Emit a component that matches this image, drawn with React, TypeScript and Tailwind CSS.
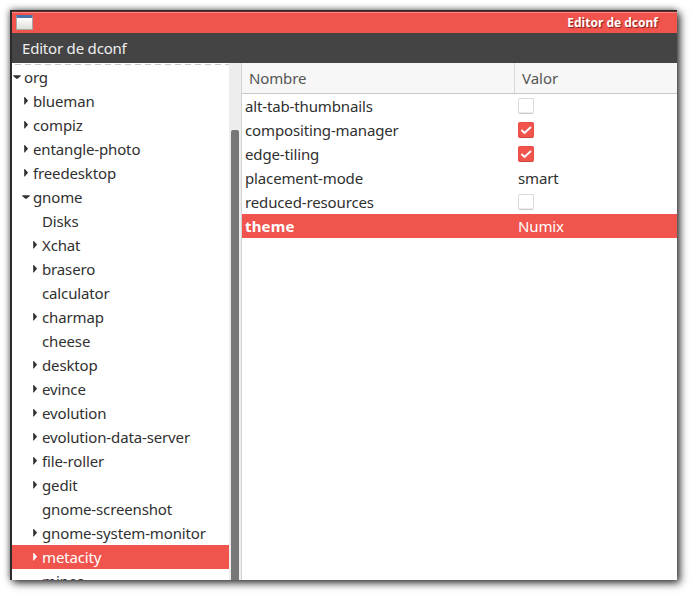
type Node = { name: string; depth: number; state?: 'open' | 'closed'; selected?: boolean };

const tree: Node[] = [
  { name: 'org', depth: 0, state: 'open' },
  { name: 'blueman', depth: 1, state: 'closed' },
  { name: 'compiz', depth: 1, state: 'closed' },
  { name: 'entangle-photo', depth: 1, state: 'closed' },
  { name: 'freedesktop', depth: 1, state: 'closed' },
  { name: 'gnome', depth: 1, state: 'open' },
  { name: 'Disks', depth: 2 },
  { name: 'Xchat', depth: 2, state: 'closed' },
  { name: 'brasero', depth: 2, state: 'closed' },
  { name: 'calculator', depth: 2 },
  { name: 'charmap', depth: 2, state: 'closed' },
  { name: 'cheese', depth: 2 },
  { name: 'desktop', depth: 2, state: 'closed' },
  { name: 'evince', depth: 2, state: 'closed' },
  { name: 'evolution', depth: 2, state: 'closed' },
  { name: 'evolution-data-server', depth: 2, state: 'closed' },
  { name: 'file-roller', depth: 2, state: 'closed' },
  { name: 'gedit', depth: 2, state: 'closed' },
  { name: 'gnome-screenshot', depth: 2 },
  { name: 'gnome-system-monitor', depth: 2, state: 'closed' },
  { name: 'metacity', depth: 2, state: 'closed', selected: true },
  { name: 'mines', depth: 2 },
];

const settings: { name: string; value: string | boolean; selected?: boolean }[] = [
  { name: 'alt-tab-thumbnails', value: false },
  { name: 'compositing-manager', value: true },
  { name: 'edge-tiling', value: true },
  { name: 'placement-mode', value: 'smart' },
  { name: 'reduced-resources', value: false },
  { name: 'theme', value: 'Numix', selected: true },
];

const indents = ['pl-0', 'pl-[9px]', 'pl-[18px]'];

function Expander({ state }: { state?: 'open' | 'closed' }) {
  return (
    <svg className="h-6 w-3 shrink-0" viewBox="0 0 12 24" fill="currentColor">
      {state === 'open' && <path d="M1.2 10.3h7.6v.6L5.6 13.8H4.4L1.2 10.9z" />}
      {state === 'closed' && <path d="M3.2 8h.6L6.8 11.2v.8L3.8 15.4h-.6z" />}
    </svg>
  );
}

function Check({ on }: { on: boolean }) {
  if (!on) {
    return <span className="h-4 w-4 rounded-[2px] border border-[#dadada] border-b-[#c8c8c8] bg-white shadow-[inset_0_-1px_0_#eeeeee]" />;
  }
  return (
    <span className="h-4 w-4 rounded-[2px] border border-[#e84f48] border-b-[#cf4640] bg-[#f0544c]">
      <svg className="block h-3.5 w-3.5" viewBox="0 0 14 14" fill="none" stroke="white" strokeWidth="2">
        <path d="M2.4 7.1l3.1 2.9L12 3.9" />
      </svg>
    </span>
  );
}

export default function App() {
  return (
    <div className="h-[596px] w-[693px] overflow-hidden bg-white pl-[10px] pt-[10px] font-['Noto_Sans',sans-serif] text-[15px] leading-6 tracking-[-0.14px] text-[#303030]">
      <div className="flex h-[570px] w-[667px] flex-col border-l-2 border-t border-[#2b2b2b] shadow-[3px_3px_8px_0px_rgba(0,0,0,0.8),-1px_-1px_6px_0px_rgba(0,0,0,0.35)]">
        <div className="flex h-[22px] shrink-0 items-center justify-between border-t border-[#6b2825] bg-[#f0544c] pl-1 pr-[19px] shadow-[inset_0_1px_0_#f58a84]">
          <span className="h-[15px] w-[17px] border border-t-[3px] border-[#a9aaa5] border-t-[#4c72ad] bg-gradient-to-b from-white to-[#dedfd9]" />
          <span className="text-[12px] font-bold leading-5 tracking-normal text-white [text-shadow:1px_1px_1px_rgba(70,0,0,0.65)]">Editor de dconf</span>
        </div>
        <div className="h-[30px] shrink-0 bg-[#444444] pl-[10px] leading-[30px] tracking-[-0.2px] text-[#eeeeee]">Editor de dconf</div>
        <div className="flex min-h-0 flex-1">
          <div className="w-[217px] shrink-0 overflow-hidden bg-white">
            <div className="h-0.5 bg-[repeating-linear-gradient(90deg,transparent_0_3px,#c9c9c9_3px_9px,transparent_9px_10px)] bg-[length:100%_1px] bg-bottom bg-no-repeat" />
            {tree.map((n) => (
              <div key={n.name} className={`flex h-6 ${indents[n.depth]} ${n.selected ? 'bg-[#f0544c] text-white' : ''}`}>
                <Expander state={n.state} />
                <span className="whitespace-nowrap">{n.name}</span>
              </div>
            ))}
          </div>
          <div className="w-3 shrink-0 bg-[#ededed] pl-0.5 pt-[67px]">
            <div className="h-full w-2 rounded-t-[2px] bg-[#777777]" />
          </div>
          <div className="flex-1 border-l border-[#d4d4d4] bg-white">
            <div className="flex h-[31px] border-b border-[#c8c8c8] bg-[#f7f7f7] leading-[31px] text-[#555555]">
              <div className="w-[273px] border-r border-[#d8d8d8] pl-[7px]">Nombre</div>
              <div className="pl-[7px] tracking-normal">Valor</div>
            </div>
            {settings.map((s) => (
              <div key={s.name} className={`flex h-6 pl-[3px] ${s.selected ? 'bg-[#f0544c] text-white' : ''}`}>
                <span className={`w-[273px] ${s.selected ? 'font-bold tracking-[0.15px]' : ''}`}>{s.name}</span>
                {typeof s.value === 'string' ? <span>{s.value}</span> : <span className="flex items-center"><Check on={s.value} /></span>}
              </div>
            ))}
          </div>
        </div>
      </div>
    </div>
  );
}
